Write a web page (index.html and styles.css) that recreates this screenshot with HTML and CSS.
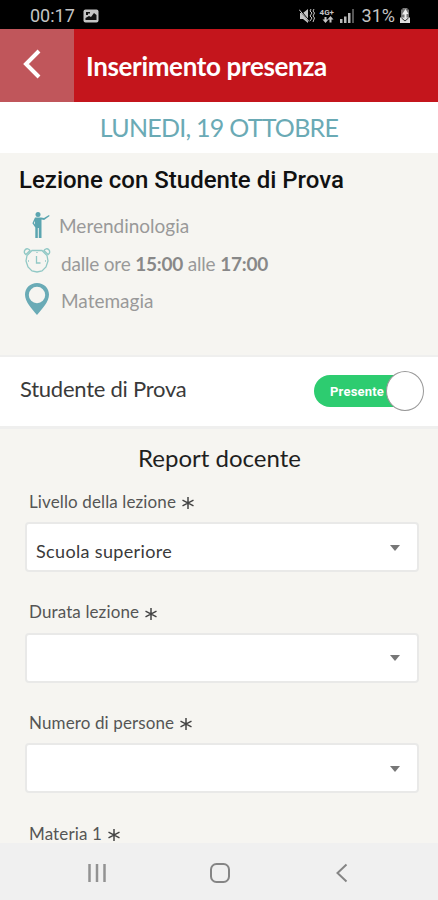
FILE: index.html
```
<!DOCTYPE html>
<html lang="it">
<head>
    <meta charset="UTF-8">
    <meta name="viewport" content="width=device-width, initial-scale=1.0">
    <title>Inserimento presenza</title>
    <link rel="stylesheet" href="styles.css">
</head>
<body>
    <div class="status-bar">
        <span class="clock">00:17</span>
        <svg class="icon-picture" width="16" height="14" viewBox="0 0 16 14">
            <rect x="0.5" y="0.5" width="15" height="13" rx="2" fill="#c4c4c4"/>
            <path d="M2.500 11V9L6 7l2 1 3-4 2.500 2V11Z" fill="#111"/>
            <path d="M3 3h4v1.500H5V6H3Z" fill="#111"/>
        </svg>
        <div class="status-right">
            <svg width="16" height="16" viewBox="0 0 16 16">
                <path d="M1 5h3l5-4v14l-5-4H1Z" fill="#c4c4c4"/>
                <path d="M1 2l9 11" stroke="#000" stroke-width="1.500"/>
                <path d="M0 1.500l10 12" stroke="#c4c4c4"/>
                <path d="M12 1l-1 2 2 2-2 3 2 2-2 3M15 1l-1 2 1.500 2L14 8l1.500 2L14 14" stroke="#c4c4c4" fill="none"/>
            </svg>
            <span class="network">
                <span>4G+</span>
                <svg width="12" height="7" viewBox="0 0 12 7">
                    <path d="M3.500 7L0.500 3.500h2V1h2v2.500h2ZM8.500 0l3 3.500h-2V6.500h-2V3.500h-2Z" fill="#c4c4c4"/>
                </svg>
            </span>
            <svg width="15" height="14" viewBox="0 0 15 14">
                <path d="M0 10h2.500v4H0ZM4 7.500h2.500V14H4ZM8 4h2.500v10H8Z" fill="#b8b8b8"/>
                <path d="M12 0h2v14h-2Z" fill="#555"/>
            </svg>
            <span class="battery">31%</span>
            <svg width="12" height="15" viewBox="0 0 12 15">
                <path d="M3.500 0h5v1.500H10V10H2V1.500h1.500Z" fill="#777"/>
                <path d="M1 9.500h10V15H1Z" fill="#ddd"/>
                <path d="M6.500 1L3 6.500h2.500V10h2V6H9.500Z" fill="#eee"/>
                <path d="M2.500 10l3.500 3 3.500-3" fill="none" stroke="#333"/>
            </svg>
        </div>
    </div>

    <header>
        <button class="back" aria-label="Indietro">
            <svg width="20" height="30" viewBox="0 0 20 30">
                <path d="M17 2L4 15l13 13" fill="none" stroke="#fff" stroke-width="4"/>
            </svg>
        </button>
        <h1>Inserimento presenza</h1>
    </header>

    <div class="date">LUNEDI, 19 OTTOBRE</div>

    <section class="lesson">
        <h2>Lezione con Studente di Prova</h2>
        <div class="detail">
            <svg class="detail-icon" width="28" height="34" viewBox="0 0 28 34">
                <circle cx="15" cy="5.500" r="2.500" fill="#5ba5b0"/>
                <path d="M12 8.500h6l3 .5 5-3 .6 1-5.500 4-2.600-.5V29h-2.700V19h-1v10h-2.500V18.500l-2.900-4.300Zm-.3 3.500L10.900 14l1.200 1.500Z" fill="#5ba5b0" fill-rule="evenodd"/>
            </svg>
            <span class="subject">Merendinologia</span>
        </div>
        <div class="detail">
            <svg class="detail-icon alarm" width="28" height="34" viewBox="0 0 28 34" fill="none" stroke="#91c8c5">
                <path d="M9 6.500h10l5 5 1 5.500-2 6-4 4-5 1-5-1-4-4-2-6 1-5.500Z" stroke-width="1.300"/>
                <path d="M13.500 12v7h4M14 8v1M5 17h1M22 17h1" stroke-width="1.300"/>
                <path d="M3 10.500a3 3 0 1 1 4-4ZM21 6.500a3 3 0 1 1 4 4Z" stroke-width="1.400"/>
            </svg>
            <span class="hours">dalle ore <b>15:00</b> alle <b>17:00</b></span>
        </div>
        <div class="detail">
            <svg class="detail-icon pin" width="28" height="34" viewBox="0 0 28 34">
                <path d="M14 1C7.200 1 2 6 2 12.500 2 20 9 27 14 33c5-6 12-13 12-20.500C26 6 20.800 1 14 1Zm0 3.800a8.200 8.200 0 1 1 0 16.400 8.200 8.200 0 0 1 0-16.400Z" fill="#6aabb6" fill-rule="evenodd"/>
            </svg>
            <span class="place">Matemagia</span>
        </div>
    </section>

    <section class="student">
        <span class="student-name">Studente di Prova</span>
        <div class="toggle">
            <span class="toggle-label">Presente</span>
            <span class="knob"></span>
        </div>
    </section>

    <section class="report">
        <h3>Report docente</h3>
        <div class="field">
            <div class="label"><span>Livello della lezione</span><svg class="star" viewBox="0 0 12 12"><path d="M6 0v12M.5 3.200l11 5.600M.5 8.800l11-5.600"/></svg></div>
            <div class="select"><span>Scuola superiore</span><i class="arrow"></i></div>
        </div>
        <div class="field">
            <div class="label"><span>Durata lezione</span><svg class="star" viewBox="0 0 12 12"><path d="M6 0v12M.5 3.200l11 5.600M.5 8.800l11-5.600"/></svg></div>
            <div class="select"><i class="arrow"></i></div>
        </div>
        <div class="field">
            <div class="label"><span>Numero di persone</span><svg class="star" viewBox="0 0 12 12"><path d="M6 0v12M.5 3.200l11 5.600M.5 8.800l11-5.600"/></svg></div>
            <div class="select"><i class="arrow"></i></div>
        </div>
        <div class="field">
            <div class="label"><span>Materia 1</span><svg class="star" viewBox="0 0 12 12"><path d="M6 0v12M.5 3.200l11 5.600M.5 8.800l11-5.600"/></svg></div>
        </div>
    </section>

    <nav>
        <svg width="20" height="20" viewBox="0 0 20 20">
            <path d="M2.500 1v18M10 1v18M17.500 1v18" stroke="#929292" stroke-width="2.500"/>
        </svg>
        <svg width="20" height="20" viewBox="0 0 20 20">
            <rect x="1" y="1" width="18" height="18" rx="5.500" fill="none" stroke="#858585" stroke-width="2"/>
        </svg>
        <svg width="20" height="20" viewBox="0 0 20 20">
            <path d="M14.500 1.500L5.500 10l9 8.500" fill="none" stroke="#858585" stroke-width="2"/>
        </svg>
    </nav>
</body>
</html>
```
FILE: styles.css
```
:root {
    --primary-color: #c4151c;
    --accent-color: #6aaab5;
    --background-color: #f6f5f1;
    --border-color: #e9e9e8;
}

* {
    box-sizing: border-box;
}

body {
    font-family: Lato, sans-serif;
    background-color: var(--background-color);
    margin: 0;
    height: 900px;
    display: flex;
    flex-direction: column;
    overflow: hidden;
    white-space: nowrap;
}

svg {
    display: block;
    flex: none;
}

.status-bar {
    height: 29px;
    flex: none;
    background-color: #000;
    color: #c4c4c4;
    font-family: Roboto, sans-serif;
    display: flex;
    align-items: center;
    padding: 2px 27px 0 30px;
}

.clock {
    font-size: 18px;
    width: 53px;
}

.status-right {
    display: flex;
    align-items: center;
    margin-left: auto;
}

.network {
    width: 16px;
    margin: 0 4px 0 5px;
    font-size: 8px;
    font-weight: 700;
    line-height: 7px;
}

.network svg {
    margin-left: 2px;
}

.battery {
    font-size: 18px;
    margin: 0 4px 0 7px;
}

header {
    height: 73px;
    flex: none;
    background-color: var(--primary-color);
    display: flex;
    align-items: center;
}

.back {
    width: 74px;
    height: 73px;
    border: none;
    padding: 0 0 4px 22px;
    background-color: #c0565b;
}

h1 {
    margin: 1px 0 0 12px;
    color: #fff;
    font-size: 26px;
    letter-spacing: -0.35px;
}

.date {
    height: 51px;
    flex: none;
    background-color: #fff;
    color: var(--accent-color);
    font-size: 25px;
    font-weight: 400;
    letter-spacing: -0.75px;
    line-height: 51px;
    text-align: center;
}

.lesson {
    height: 202px;
    flex: none;
    padding: 13px 19px 0;
}

h2 {
    margin: 0 0 13px;
    color: #111;
    font-family: Roboto, sans-serif;
    font-size: 24px;
    font-weight: 500;
    line-height: 28px;
}

.detail {
    display: flex;
    align-items: center;
    height: 37.500px;
    padding-left: 4px;
    color: #999;
    font-size: 19px;
}

.detail-icon {
    margin-right: 10px;
}

.alarm {
    margin-top: -4px;
}

.pin {
    margin-top: -4px;
}

.subject {
    margin-left: -2px;
}

.hours {
    letter-spacing: -0.2px;
}

.detail b {
    color: #888;
}

.student {
    height: 74px;
    flex: none;
    display: flex;
    align-items: center;
    justify-content: space-between;
    padding: 0 14px 2px 20px;
    background-color: #fff;
    border-top: 2px solid #efefee;
    border-bottom: 3px solid #efefee;
    color: #3a3a3a;
    font-size: 22px;
}

.student-name {
    padding-bottom: 4px;
    letter-spacing: -0.25px;
}

.toggle {
    position: relative;
    width: 110px;
    height: 32px;
    padding-left: 16px;
    border-radius: 16px;
    background: linear-gradient(90deg, #2dcc70 90px, transparent 90px);
    color: #fff;
    font: 700 13px/33px Roboto, sans-serif;
    letter-spacing: 0.2px;
}

.knob {
    position: absolute;
    top: -4px;
    right: 0;
    width: 38px;
    height: 40px;
    border: 1px solid #999;
    border-radius: 50%;
    background-color: #fff;
}

.report {
    flex: 1;
    min-height: 0;
    padding: 12px 19px 0 25px;
}

h3 {
    margin: 0 0 16px;
    color: #1f1f1f;
    font-size: 24px;
    font-weight: 400;
    line-height: 34px;
    text-align: center;
    padding-right: 5px;
}

.field {
    height: 110.700px;
}

.label {
    height: 31px;
    display: flex;
    align-items: center;
    padding: 0 4px 11px;
    color: #555;
    font-size: 17px;
    letter-spacing: 0.12px;
}

.star {
    width: 12px;
    height: 12px;
    margin: 4px 0 0 6px;
    fill: none;
    stroke: #444;
    stroke-width: 1.500;
}

.select {
    height: 50px;
    display: flex;
    align-items: center;
    padding: 7px 17px 0 9px;
    border: 2px solid var(--border-color);
    border-radius: 4px;
    background-color: #fff;
    color: #3a3a3a;
    font-size: 18px;
    letter-spacing: 0.35px;
}

.arrow {
    margin: -6px 0 0 auto;
    border: 5px solid transparent;
    border-top: 6px solid #777;
    border-bottom: 0;
}

nav {
    height: 57px;
    flex: none;
    display: flex;
    justify-content: space-between;
    align-items: center;
    padding: 2px 86px 0 87px;
    background-color: #f0f0f0;
}
```
